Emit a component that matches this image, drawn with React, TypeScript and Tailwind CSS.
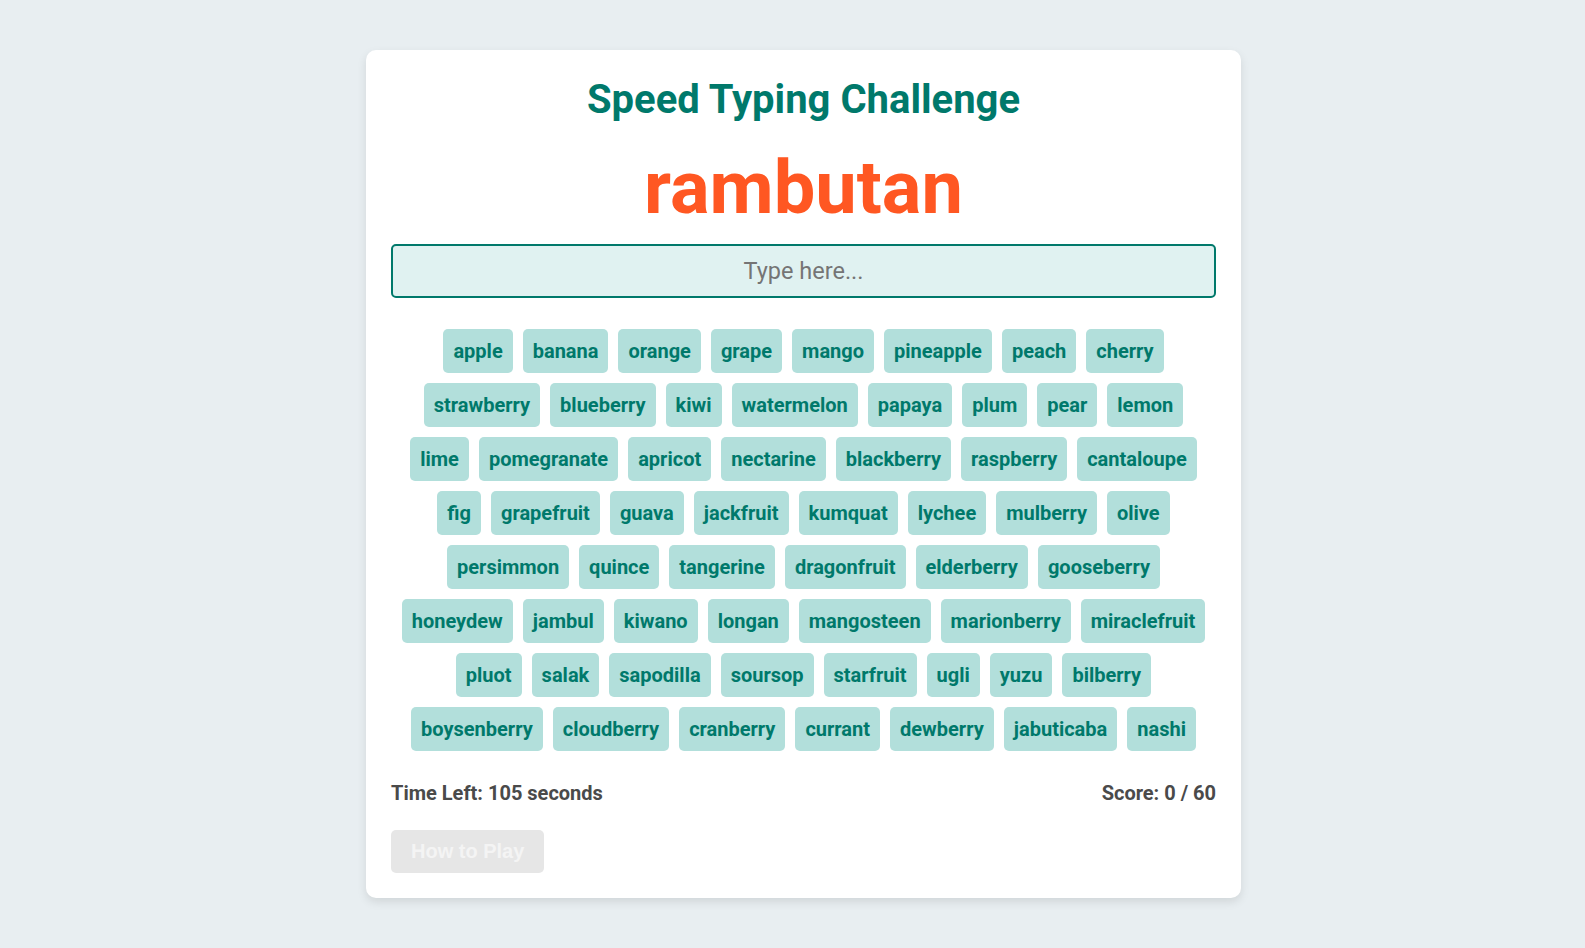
import React from "react";

const words = [
  "apple","banana","orange","grape","mango","pineapple","peach","cherry",
  "strawberry","blueberry","kiwi","watermelon","papaya","plum","pear","lemon",
  "lime","pomegranate","apricot","nectarine","blackberry","raspberry","cantaloupe",
  "fig","grapefruit","guava","jackfruit","kumquat","lychee","mulberry","olive",
  "persimmon","quince","tangerine","dragonfruit","elderberry","gooseberry",
  "honeydew","jambul","kiwano","longan","mangosteen","marionberry","miraclefruit",
  "pluot","salak","sapodilla","soursop","starfruit","ugli","yuzu","bilberry",
  "boysenberry","cloudberry","cranberry","currant","dewberry","jabuticaba","nashi",
];

export default function App() {
  return (
    <div className="min-h-screen bg-[#e8eef1] pt-[50px] pl-[22px] flex justify-center items-start font-['Roboto',sans-serif]">
      <div className="w-[875px] bg-white rounded-[10px] p-[25px] shadow-[0_4px_10px_rgba(0,0,0,0.1)]">
        <h1 className="mt-[1px] text-center text-[40px] leading-[47px] font-bold text-[#00796b]">
          Speed Typing Challenge
        </h1>
        <div className="mt-[23px] text-center text-[74px] leading-[84px] font-bold text-[#ff5722]">
          rambutan
        </div>
        <input
          type="text"
          placeholder="Type here..."
          className="mt-[14px] block w-full h-[54px] border-2 border-[#00796b] rounded-[5px] bg-[#e0f2f1] text-center text-[23.5px] px-[10px] text-[#333] placeholder:text-[#757575] outline-none"
        />
        <div className="mt-[26px] flex flex-wrap justify-center">
          {words.map((w) => (
            <span
              key={w}
              className="m-[5px] px-[10px] py-[10px] bg-[#b2dfdb] text-[#00796b] rounded-[5px] text-[20px] leading-[24px] font-bold"
            >
              {w}
            </span>
          ))}
        </div>
        <div className="mt-[26px] flex justify-between text-[20px] leading-[23px] font-bold text-[#4a4a4a]">
          <span>Time Left: 105 seconds</span>
          <span>Score: 0 / 60</span>
        </div>
        <button className="mt-[25px] block px-[20px] py-[10px] rounded-[5px] bg-[#e6e6e6] text-[#f4f4f4] text-[20px] leading-[23px] font-bold font-['Liberation_Sans',Arial,sans-serif]">
          How to Play
        </button>
      </div>
    </div>
  );
}
